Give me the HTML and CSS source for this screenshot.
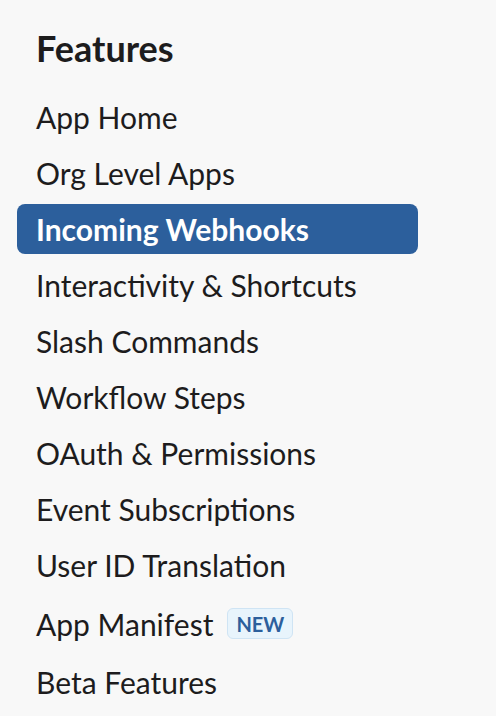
FILE: index.html
```html
<!DOCTYPE html>
<html>
<head>
<meta charset="utf-8">
<link rel="stylesheet" href="styles.css">
</head>
<body>
<nav class="sidebar">
  <h2 class="title">Features</h2>
  <ul class="menu">
    <li class="item">App Home</li>
    <li class="item">Org Level Apps</li>
    <li class="item active">Incoming Webhooks</li>
    <li class="item">Interactivity &amp; Shortcuts</li>
    <li class="item">Slash Commands</li>
    <li class="item">Workflow Steps</li>
    <li class="item">OAuth &amp; Permissions</li>
    <li class="item">Event Subscriptions</li>
    <li class="item">User ID Translation</li>
    <li class="item tall">App Manifest <span class="badge">NEW</span></li>
    <li class="item">Beta Features</li>
  </ul>
</nav>
</body>
</html>
```
FILE: styles.css
```css
html, body {
  margin: 0;
  padding: 0;
  background: #f8f8f8;
}
body {
  font-family: Lato, "Noto Sans", sans-serif;
  color: #1d1c1d;
}
.sidebar {
  width: 401px;
  padding: 26px 0 0 17px;
}
.title {
  margin: 0 0 0 19px;
  font-size: 36px;
  font-weight: 700;
  line-height: 44px;
  height: 48px;
}
.menu {
  list-style: none;
  margin: 0;
  padding: 0;
  display: flex;
  flex-direction: column;
  gap: 6px;
  margin-top: 18px;
}
.item {
  height: 50px;
  display: flex;
  align-items: center;
  padding-left: 19px;
  font-size: 30px;
  border-radius: 8px;
}
.item.tall {
  height: 55px;
}
.item.active {
  background: #2c5f9c;
  color: #fff;
  font-weight: 700;
}
.badge {
  margin-left: 14px;
  display: inline-flex;
  align-items: center;
  height: 29px;
  padding: 0 8px;
  font-size: 20px;
  font-weight: 700;
  color: #2c5f9c;
  background: #e8f4fc;
  border: 1px solid #cfe4f4;
  border-radius: 6px;
}
```
